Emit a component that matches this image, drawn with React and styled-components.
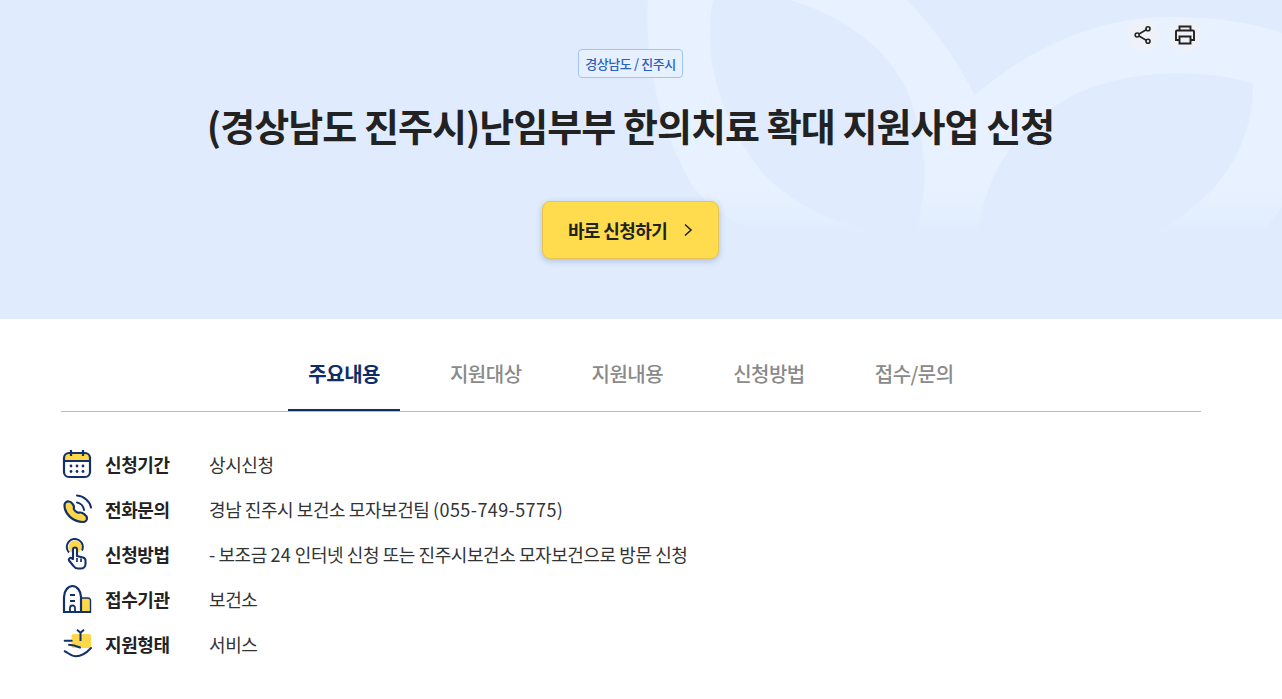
import React from 'react'
import styled, { createGlobalStyle } from 'styled-components'

const GlobalStyle = createGlobalStyle`
  * { box-sizing: border-box; }
  body {
    margin: 0;
    background: #fff;
    color: #222;
    font-family: "Noto Sans CJK KR", "Noto Sans", sans-serif;
  }
`
const Hero = styled.section`
  position: relative;
  height: 319px;
  padding-right: 21px;
  background: #e0ecfe;
  overflow: hidden;
  display: flex;
  flex-direction: column;
  align-items: center;
`
const Decoration = styled.svg`
  position: absolute;
  top: 0;
  left: 0;
`
const ActionGroup = styled.div`
  position: absolute;
  top: 19px;
  left: 1127px;
  display: flex;
  gap: 10px;
`
const ActionButton = styled.button`
  width: 32px;
  height: 32px;
  padding: 0;
  border: 0;
  border-radius: 50%;
  background: #eef1f7;
  color: #222;
  display: grid;
  place-items: center;
`
const Chip = styled.span`
  position: relative;
  margin-top: 49px;
  height: 29px;
  width: 105px;
  border: 1px solid #a3c4f0;
  border-radius: 4px;
  background: #e6f0ff;
  color: #2a62c0;
  font-size: 13px;
  font-weight: 500;
  letter-spacing: -0.4px;
  display: grid;
  place-items: center;
`
const Title = styled.h1`
  position: relative;
  margin: 20px 0 0;
  font-size: 38px;
  line-height: 54px;
  font-weight: 700;
  letter-spacing: -0.95px;
  color: #222;
`
const ApplyButton = styled.button`
  position: relative;
  margin-top: 49px;
  width: 177px;
  height: 58px;
  padding: 0 0 0 2px;
  border: 1px solid #e6c552;
  border-radius: 8px;
  background: #ffdc4d;
  box-shadow: 0 2px 6px rgba(60, 80, 130, 0.3);
  color: #222;
  font-family: inherit;
  font-size: 18px;
  font-weight: 700;
  letter-spacing: -0.6px;
  display: flex;
  align-items: center;
  justify-content: center;
  gap: 14px;
`
const Content = styled.main`
  width: 1140px;
  margin-left: 61px;
`
const Tabs = styled.nav`
  height: 93px;
  border-bottom: 1px solid #bbb;
  display: flex;
  justify-content: center;
  align-items: flex-end;
  gap: 30px;
`
const Tab = styled.a`
  height: 92px;
  padding: 19px 20px 0;
  display: flex;
  align-items: center;
  font-size: 20px;
  letter-spacing: -0.5px;
  font-weight: ${p => (p.$active ? 700 : 500)};
  color: ${p => (p.$active ? '#0f2d66' : '#8a8a8a')};
  border-bottom: 2px solid ${p => (p.$active ? '#0f2d66' : 'transparent')};
`
const InfoList = styled.dl`
  margin: 29px 0 0;
  display: flex;
  flex-direction: column;
`
const InfoRow = styled.div`
  height: 45px;
  display: flex;
  align-items: center;
`
const IconBox = styled.span`
  width: 32px;
  height: 32px;
  margin-right: 12px;
  display: grid;
  place-items: center;
`
const Label = styled.dt`
  width: 104px;
  font-size: 18px;
  font-weight: 700;
  letter-spacing: -0.4px;
  color: #222;
`
const Value = styled.dd`
  margin: 0;
  font-size: 18px;
  letter-spacing: -0.43px;
  color: #333;
`
const Digits = styled.span`
  letter-spacing: 0.4px;
`

const navy = '#12316b'
const yellow = '#ffd84a'

const ShareIcon = () => (
  <svg width="20" height="20" viewBox="0 0 20 20" fill="none" stroke="currentColor" strokeWidth="1.6">
    <circle cx="15" cy="3.800" r="2" />
    <circle cx="4.200" cy="10" r="2" />
    <circle cx="15" cy="16.200" r="2" />
    <path d="M6 9 13.200 4.800M6 11l7.200 4.200" />
  </svg>
)
const PrintIcon = () => (
  <svg width="22" height="22" viewBox="0 0 22 22" fill="none" stroke="currentColor" strokeWidth="1.9">
    <path d="M5.500 7V2.500h11V7" />
    <path d="M5.500 16H2V7.500a1 1 0 0 1 1-1h16a1 1 0 0 1 1 1V16h-3.500" />
    <path d="M5.500 12.500h11v7h-11z" />
  </svg>
)
const Chevron = () => (
  <svg width="14" height="14" viewBox="0 0 14 14" fill="none" stroke="#222" strokeWidth="1.6">
    <path d="M4 1.500 10 7l-6 5.500" />
  </svg>
)
const CalendarIcon = () => (
  <svg width="30" height="30" viewBox="0 0 30 30" fill="none">
    <path d="M2 12V8a4 4 0 0 1 4-4h18a4 4 0 0 1 4 4v4z" fill={yellow} />
    <rect x="2" y="4" width="26" height="24" rx="5" stroke={navy} strokeWidth="2.200" />
    <path d="M2 12h26M9 1V7M21 1V7" stroke={navy} strokeWidth="2.200" />
    <g fill={navy}>
      <circle cx="9" cy="17" r="1.400" /><circle cx="15" cy="17" r="1.400" /><circle cx="21" cy="17" r="1.400" />
      <circle cx="9" cy="22.500" r="1.400" /><circle cx="15" cy="22.500" r="1.400" /><circle cx="21" cy="22.500" r="1.400" />
    </g>
  </svg>
)
const PhoneIcon = () => (
  <svg width="30" height="30" viewBox="0 0 30 30" fill="none">
    <path d="M2.500 11C2.500 8.500 5 7 7 7.500C9.500 8 12 11 12 13C12 14 11.500 14.500 12 15.500C13 17 14.500 18 15.500 18.500C16.500 19 17 18.500 18.500 18.500C20.500 18.500 25 21.500 25 24C25 26 23.500 28 21 28C11 28 2.500 20 2.500 11Z" fill={yellow} stroke={navy} strokeWidth="2.200" strokeLinejoin="round" />
    <path d="M15 8.500c3.500.5 6.500 3.500 7 7.500M15 1.500c7 .5 13 6 14 12" stroke={navy} strokeWidth="2" strokeLinecap="round" />
  </svg>
)
const TouchIcon = () => (
  <svg width="30" height="32" viewBox="0 0 30 32" fill="none">
    <circle cx="13" cy="9" r="6.500" fill={yellow} />
    <path d="M7 14.500A8 8 0 1 1 20 12.500" stroke={navy} strokeWidth="2" />
    <path d="M11 21V11.500a2 2 0 0 1 4 0V18l6 1.500c1.500.4 2.500 1.500 2.500 3V26c0 2.500-2 4.500-4.500 4.500h-3c-2 0-3.500-1-4.500-2.500L7 22.500c-1-1.500 1.500-3.500 3-2z" fill="#fff" stroke={navy} strokeWidth="2.100" strokeLinejoin="round" />
    <path d="M15 20v4M19 20.500V24" stroke={navy} strokeWidth="1.700" />
  </svg>
)
const BuildingIcon = () => (
  <svg width="30" height="30" viewBox="0 0 30 30" fill="none">
    <path d="M19 14h7a2.500 2.500 0 0 1 2.500 2.500V28H19z" fill={yellow} stroke={navy} strokeWidth="1.400" />
    <path d="M2 28V13C2 7 6 2 10.500 2S19 7 19 13v15z" fill="#fff" stroke={navy} strokeWidth="2.200" strokeLinejoin="round" />
    <path d="M1 28h28M8 11h5M8 17h5" stroke={navy} strokeWidth="2.200" />
    <path d="M8 28v-4a2.500 2.500 0 0 1 5 0v4" stroke={navy} strokeWidth="1.800" />
  </svg>
)
const GiftHandIcon = () => (
  <svg width="32" height="30" viewBox="0 0 32 30" fill="none">
    <rect x="10.500" y="5" width="19.500" height="14" rx="2" fill={yellow} />
    <path d="M19.500 12V3.500M16 .8l3.500 3 3.500-3" stroke={navy} strokeWidth="2" />
    <path d="M3.700 11.700h7" stroke={navy} strokeWidth="2" strokeLinecap="round" />
    <path d="M8 15.700c4 0 7 1 11 2.800" stroke={navy} strokeWidth="2" strokeLinecap="round" />
    <path d="M3.700 22.300C7 23.500 10 27.300 15 27.300c6 0 11-4 15-8.300" stroke={navy} strokeWidth="2" strokeLinecap="round" />
  </svg>
)

const tabs = ['주요내용', '지원대상', '지원내용', '신청방법', '접수/문의']
const rows = [
  { Icon: CalendarIcon, label: '신청기간', value: '상시신청' },
  { Icon: PhoneIcon, label: '전화문의', value: <>경남 진주시 보건소 모자보건팀 <Digits>(055-749-5775)</Digits></> },
  { Icon: TouchIcon, label: '신청방법', value: <>- 보조금 <Digits>24</Digits> 인터넷 신청 또는 진주시보건소 모자보건으로 방문 신청</> },
  { Icon: BuildingIcon, label: '접수기관', value: '보건소' },
  { Icon: GiftHandIcon, label: '지원형태', value: '서비스' },
]

export default function App() {
  return (
    <>
      <GlobalStyle />
      <Hero>
        <Decoration width="1282" height="319" viewBox="0 0 1282 319">
          <defs>
            <linearGradient id="ring" x1="0" y1="0" x2="0" y2="235" gradientUnits="userSpaceOnUse">
              <stop offset="0" stopColor="#e8f1ff" />
              <stop offset="0.8" stopColor="#e8f1ff" />
              <stop offset="1" stopColor="#e0ecfe" />
            </linearGradient>
          </defs>
          <path
            fill="url(#ring)"
            d="M648 0C644 60 660 130 692 185C715 215 750 235 790 235H985C992 190 985 140 975 97C955 55 930 25 907 0Z"
          />
          <path
            fill="url(#ring)"
            d="M973 97C1020 55 1090 17 1170 17C1210 17 1250 22 1282 33V207L1260 235H970Z"
          />
          <path
            fill="#e0ecfe"
            d="M713 0C703 50 715 110 760 170C790 205 850 235 915 235C928 190 930 150 907 90C885 45 840 15 790 0Z"
          />
          <path
            fill="#e0ecfe"
            d="M978 235C985 170 1020 120 1080 92C1130 70 1200 68 1253 83C1255 130 1230 180 1195 205C1180 220 1165 228 1150 235Z"
          />
        </Decoration>
        <ActionGroup>
          <ActionButton aria-label="공유"><ShareIcon /></ActionButton>
          <ActionButton aria-label="인쇄"><PrintIcon /></ActionButton>
        </ActionGroup>
        <Chip>경상남도 / 진주시</Chip>
        <Title>(경상남도 진주시)난임부부 한의치료 확대 지원사업 신청</Title>
        <ApplyButton>
          바로 신청하기
          <Chevron />
        </ApplyButton>
      </Hero>
      <Content>
        <Tabs>
          {tabs.map((tab, i) => (
            <Tab key={tab} $active={i === 0}>{tab}</Tab>
          ))}
        </Tabs>
        <InfoList>
          {rows.map(({ Icon, label, value }) => (
            <InfoRow key={label}>
              <IconBox><Icon /></IconBox>
              <Label>{label}</Label>
              <Value>{value}</Value>
            </InfoRow>
          ))}
        </InfoList>
      </Content>
    </>
  )
}
